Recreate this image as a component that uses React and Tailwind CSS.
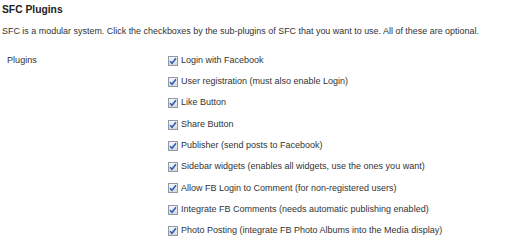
export default function App() {
  const items = [
    "Login with Facebook",
    "User registration (must also enable Login)",
    "Like Button",
    "Share Button",
    "Publisher (send posts to Facebook)",
    "Sidebar widgets (enables all widgets, use the ones you want)",
    "Allow FB Login to Comment (for non-registered users)",
    "Integrate FB Comments (needs automatic publishing enabled)",
    "Photo Posting (integrate FB Photo Albums into the Media display)",
  ];
  return (
    <div className="w-[520px] h-[245px] overflow-hidden bg-white font-['Liberation_Sans',Arial,sans-serif] text-[#333] pl-[2px]">
      <h2 className="text-[10.3px] font-bold text-[#222] leading-[14px] pt-[3px]">SFC Plugins</h2>
      <p className="text-[8.95px] leading-[12px] mt-[8px]">
        SFC is a modular system. Click the checkboxes by the sub-plugins of SFC that you want to use. All of these are optional.
      </p>
      <div className="flex mt-[13px]">
        <div className="w-[166px] pl-[5px] text-[9.1px] leading-[21.3px]">Plugins</div>
        <div className="flex flex-col">
          {items.map((t) => (
            <div key={t} className="h-[21.3px] flex items-center gap-[3px] text-[9px]">
              <span className="w-[10px] h-[10px] border border-[#8f98a8] bg-gradient-to-b from-[#f6f6f6] to-[#dadada] flex items-center justify-center">
                <svg width="8" height="8" viewBox="0 0 8 8">
                  <path d="M1 4.2 L3 6.3 L7 1.2" fill="none" stroke="#2d5fb5" strokeWidth="1.6" />
                </svg>
              </span>
              <span>{t}</span>
            </div>
          ))}
        </div>
      </div>
    </div>
  );
}
